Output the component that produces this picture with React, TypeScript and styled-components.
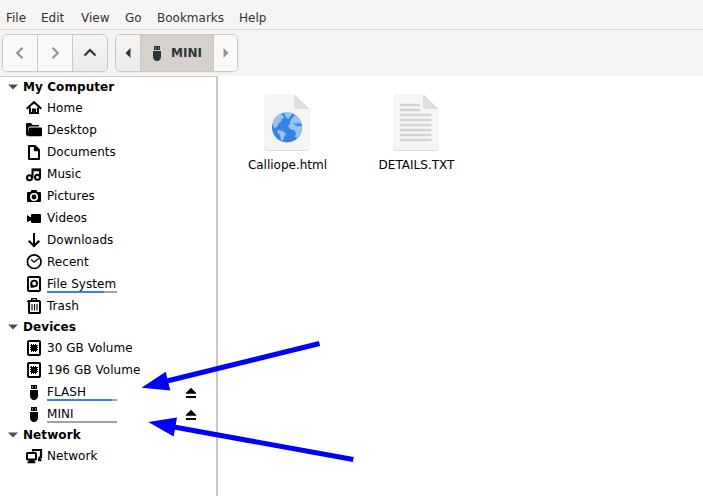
import React from 'react';
import styled, { createGlobalStyle } from 'styled-components';

const GlobalStyle = createGlobalStyle`
  * { box-sizing: border-box; }
  body { margin: 0; overflow: hidden; background: #fff; }
`;

const Window = styled.div`
  position: relative;
  display: flex;
  flex-direction: column;
  width: 703px;
  height: 496px;
  overflow: hidden;
  background: #fff;
  color: #000;
  font: 12px 'DejaVu Sans', sans-serif;
`;

const MenuBar = styled.nav`
  display: flex;
  flex: none;
  gap: 16px;
  height: 30px;
  padding: 6px 6px 0;
  background: #f6f5f4;
  border-bottom: 1px solid #dcdad7;
  color: #2e3436;
  line-height: 24px;
`;

const MenuItem = styled.span<{ $w: number }>`
  width: ${(p) => p.$w}px;
  white-space: nowrap;
`;

const Toolbar = styled.div`
  display: flex;
  flex: none;
  gap: 7px;
  height: 46px;
  padding: 4px 2px 0;
  background: #f5f4f2;
`;

const ButtonGroup = styled.div`
  display: flex;
  height: 38px;
  border: 1px solid #cdc7c2;
  border-radius: 5px;
  overflow: hidden;
  box-shadow: 0 1px 1px rgba(0, 0, 0, 0.04);
`;

const ToolButton = styled.button<{ $w: number; $kind?: 'raised' | 'active' }>`
  display: flex;
  align-items: center;
  justify-content: center;
  gap: 6px;
  width: ${(p) => p.$w}px;
  padding: 0 ${(p) => (p.$kind === 'active' ? 3 : 0)}px 0 0;
  border: 0;
  background: ${(p) =>
    p.$kind === 'active' ? '#d6d1cd' : p.$kind === 'raised' ? 'linear-gradient(#f6f5f4, #edebe9)' : '#faf9f8'};
  color: ${(p) => (p.$kind ? '#2e3436' : '#929595')};
  font: bold 12px 'DejaVu Sans', sans-serif;
  & + & { border-left: 1px solid #cdc7c2; }
`;

const Body = styled.div`
  display: flex;
  flex: 1;
  min-height: 0;
`;

const Sidebar = styled.aside`
  width: 218px;
  border-top: 1px solid #cdc7c2;
  border-right: 2px solid #cdc7c2;
`;

const SectionTitle = styled.div`
  display: flex;
  align-items: center;
  gap: 5px;
  height: 20px;
  padding-left: 8px;
  font-weight: bold;
  letter-spacing: 0.08px;
`;

const Place = styled.div`
  display: flex;
  gap: 5px;
  height: 22px;
  padding: 3px 17px 0 26px;
`;

const PlaceLabel = styled.div`
  flex: 1;
  line-height: 16px;
  letter-spacing: 0.05px;
  white-space: nowrap;
`;

const Usage = styled.div<{ $used: number }>`
  width: 70px;
  height: 2px;
  margin-top: -1px;
  background: linear-gradient(90deg, #3584e4 ${(p) => p.$used}px, #a8a09b ${(p) => p.$used}px);
`;

const Icon = styled.svg`
  display: block;
  flex: none;
  overflow: visible;
`;

const Files = styled.main`
  display: flex;
  flex: 1;
  padding: 18px 0 0 4px;
`;

const FileItem = styled.div`
  display: flex;
  flex-direction: column;
  align-items: center;
  gap: 6px;
  width: 129px;
  line-height: 15px;
`;

const FileName = styled.span`
  padding-left: 2px;
`;

const Annotation = styled.svg`
  position: absolute;
  inset: 0;
  pointer-events: none;
`;

const usb = (
  <>
    <path fillRule="evenodd" d="M5 1h6v4H5zM6 2.500v1h1v-1zM9 2.500v1h1v-1z" />
    <path d="M4 6h8v5.500C12 14 10.500 16 8 16s-4-2-4-4.500z" />
  </>
);
const volume = (
  <>
    <rect x="2" y="1" width="12" height="14" rx="1" fill="none" stroke="#000" strokeWidth="2" />
    <path d="M5 5h6v6H5z" />
    <path d="M4 5.500h8M4 7.500h8M4 9.500h8M5.500 4v8M7.500 4v8M9.500 4v8" stroke="#000" fill="none" />
  </>
);

const icons: Record<string, React.ReactNode> = {
  home: (
    <>
      <path d="M.7 8.700 8 2.200l7.300 6.500" fill="none" stroke="#000" strokeWidth="2" />
      <path d="M4 7.500V13h2.900V9.500h2.200V13H12V7.500" fill="none" stroke="#000" strokeWidth="2" />
    </>
  ),
  desktop: (
    <>
      <path d="M0 2q0-1 1-1h4l1.500 2H12q1 0 1 1v.500H4q-1.500 0-1.800 1.500L2 13.500H1Q0 13.500 0 12.500z" />
      <path d="M4 5.500H15q1 0 1 1V13q0 1.300-1 1.300H1.500L2.800 6.500Q3 5.500 4 5.500z" />
    </>
  ),
  documents: <path d="M3 2h6l4 4v9H3zM8.800 2v4.200H13" fill="none" stroke="#000" strokeWidth="2" strokeLinejoin="round" />,
  music: (
    <g fill="none" stroke="#000" strokeWidth="2">
      <circle cx="3.500" cy="11.700" r="2.500" />
      <circle cx="11.500" cy="11.200" r="2.500" />
      <path d="M6.500 12V3.500H14V11" />
      <path d="M6.500 4h7.500" strokeWidth="2.500" />
    </g>
  ),
  pictures: (
    <path
      fillRule="evenodd"
      d="M5.500 2h5l1 2H14q1 0 1 1v8q0 1-1 1H2q-1 0-1-1V5q0-1 1-1h2.500zM8 5a4 4 0 1 0 0 8 4 4 0 0 0 0-8zM8 6.600a2.400 2.400 0 1 1 0 4.800 2.400 2.400 0 0 1 0-4.800z"
    />
  ),
  videos: <path d="M6 4h8q1 0 1 1v7q0 1-1 1H6q-1 0-1-1v-1.500L1 12V5l4 2.500V5q0-1 1-1z" />,
  downloads: <path d="M8 1v12M2.700 8.700 8 14l5.300-5.300" fill="none" stroke="#000" strokeWidth="2" />,
  recent: (
    <>
      <circle cx="8.200" cy="7.700" r="6.800" fill="none" stroke="#000" strokeWidth="1.700" />
      <path d="m5.200 5.500 2.800 2.700 4.500-3.700" fill="none" stroke="#000" strokeWidth="1.200" />
    </>
  ),
  filesystem: (
    <>
      <rect x="2" y="1" width="12" height="14" rx="1" fill="none" stroke="#000" strokeWidth="2" />
      <circle cx="8.200" cy="7.500" r="2.900" fill="none" stroke="#000" strokeWidth="1.900" />
      <path d="M4.500 7v4.700h3.200V10L5.500 8z" />
    </>
  ),
  trash: (
    <>
      <path d="M1 4q0-2 2-2h2V0h6v2h2q2 0 2 2zM6.500 1.300V2h3v-.700z" fillRule="evenodd" />
      <path d="M3 4v10.500q0 .500.500.500h10q.500 0 .500-.500V4" fill="none" stroke="#000" strokeWidth="2" />
      <path d="M6 6v6.500M8.500 6v6.500M11 6v6.500" stroke="#000" strokeWidth="1.100" />
    </>
  ),
  volume,
  usb,
  network: (
    <>
      <path d="M7 3.500V2h8v7.500h-2.500" fill="none" stroke="#000" strokeWidth="2.200" />
      <rect x="1" y="5" width="9" height="6.500" rx=".5" fill="#fff" stroke="#000" strokeWidth="2" />
      <path d="M3.500 12h4l2 2v1.200h-8V14zM12 10h2l1.500 2v1.200H12z" />
    </>
  ),
};

type Entry = { icon: string; label: string; used?: number; eject?: boolean };

const sections: { title: string; places: Entry[] }[] = [
  {
    title: 'My Computer',
    places: [
      { icon: 'home', label: 'Home' },
      { icon: 'desktop', label: 'Desktop' },
      { icon: 'documents', label: 'Documents' },
      { icon: 'music', label: 'Music' },
      { icon: 'pictures', label: 'Pictures' },
      { icon: 'videos', label: 'Videos' },
      { icon: 'downloads', label: 'Downloads' },
      { icon: 'recent', label: 'Recent' },
      { icon: 'filesystem', label: 'File System', used: 57 },
      { icon: 'trash', label: 'Trash' },
    ],
  },
  {
    title: 'Devices',
    places: [
      { icon: 'volume', label: '30 GB Volume' },
      { icon: 'volume', label: '196 GB Volume' },
      { icon: 'usb', label: 'FLASH', used: 65, eject: true },
      { icon: 'usb', label: 'MINI', used: 0, eject: true },
    ],
  },
  { title: 'Network', places: [{ icon: 'network', label: 'Network' }] },
];

const menus: [string, number][] = [
  ['File', 19],
  ['Edit', 24],
  ['View', 28],
  ['Go', 16],
  ['Bookmarks', 66],
  ['Help', 30],
];

function Sheet({ children }: { children: React.ReactNode }) {
  return (
    <Icon width="46" height="58" viewBox="0 0 46 58">
      <path d="M4 .5h26l15.500 15V53q0 4-4 4H4q-4 0-4-4V4.500q0-4 4-4z" fill="#deddda" />
      <path d="M4 0h26l15.500 15V52q0 4-4 4H4q-4 0-4-4V4q0-4 4-4z" fill="#f6f5f4" />
      <path d="M30 0l15.500 15H32q-2 0-2-2z" fill="#deddda" />
      {children}
    </Icon>
  );
}

export default function App() {
  return (
    <Window>
      <GlobalStyle />
      <MenuBar>
        {menus.map(([label, w]) => (
          <MenuItem key={label} $w={w}>{label}</MenuItem>
        ))}
      </MenuBar>
      <Toolbar>
        <ButtonGroup>
          <ToolButton $w={34} aria-label="Back">
            <Icon width="16" height="16" fill="none" stroke="currentColor" strokeWidth="2.200"><path d="M10.500 2.700 5.200 8l5.300 5.300" /></Icon>
          </ToolButton>
          <ToolButton $w={35} aria-label="Forward">
            <Icon width="16" height="16" fill="none" stroke="currentColor" strokeWidth="2.200"><path d="M5.500 2.700 10.800 8l-5.300 5.300" /></Icon>
          </ToolButton>
          <ToolButton $w={35} $kind="raised" aria-label="Up">
            <Icon width="16" height="16" fill="none" stroke="currentColor" strokeWidth="2.200"><path d="M2.500 10.500 8 5l5.500 5.500" /></Icon>
          </ToolButton>
        </ButtonGroup>
        <ButtonGroup>
          <ToolButton $w={24} $kind="raised" aria-label="Previous location">
            <Icon width="16" height="16" fill="currentColor"><path d="M10.500 3v10L5.500 8z" /></Icon>
          </ToolButton>
          <ToolButton $w={73} $kind="active">
            <Icon width="16" height="16" fill="currentColor">{usb}</Icon>
            MINI
          </ToolButton>
          <ToolButton $w={24} aria-label="Next location">
            <Icon width="16" height="16" fill="currentColor"><path d="M5.500 3v10l5-5z" /></Icon>
          </ToolButton>
        </ButtonGroup>
      </Toolbar>
      <Body>
        <Sidebar>
          {sections.map((s) => (
            <section key={s.title}>
              <SectionTitle>
                <Icon width="10" height="6" fill="#4d4d4d"><path d="M0 .5h10L5 5.500z" /></Icon>
                {s.title}
              </SectionTitle>
              {s.places.map((p) => (
                <Place key={p.label}>
                  <Icon width="16" height="16">{icons[p.icon]}</Icon>
                  <PlaceLabel>
                    {p.label}
                    {p.used !== undefined && <Usage $used={p.used} />}
                  </PlaceLabel>
                  {p.eject && (
                    <Icon width="16" height="16"><path d="M8 3.800l5.200 5.200v.7H2.800V9zM3 12h10v2H3z" /></Icon>
                  )}
                </Place>
              ))}
            </section>
          ))}
        </Sidebar>
        <Files>
          <FileItem>
            <Sheet>
              <circle cx="23" cy="33.500" r="15" fill="#3584e4" />
              <path
                fill="#99c1f1"
                d="M9 28q2-6 7-8l3 1 1 3-2 1-1 3-2 1-2 4-3 1-1-2zM20 19q4-1.500 8 0l-1 3-3 3-2-2zM14 36l5 1 3 3-2 3-1 4-2-1-1-5-3-3zM26 28l2-4 3-3q4 3 6 7l-1 2-2-1-2 2 1 1 4 0 1 1q0 5-3 9l-2 2-2-1 1-4-2-3-4-1-2-3 2-2z"
              />
              <path d="M29 29l2 1 2-1 2 1M31 31l3 1" stroke="#3584e4" strokeWidth=".8" fill="none" />
            </Sheet>
            <FileName>Calliope.html</FileName>
          </FileItem>
          <FileItem>
            <Sheet>
              <path d="M7 11h20M7 16h20M7 21h31.500M7 26h31.500M7 31h31.500M7 36h31.500M7 41h31.500M7 46h31.500" stroke="#d5d4d1" strokeWidth="2.400" />
            </Sheet>
            <FileName>DETAILS.TXT</FileName>
          </FileItem>
        </Files>
      </Body>
      <Annotation width="703" height="496" fill="#00f" stroke="#00f">
        <path d="M319.500 343.500 167 381M353.300 459.500 174 427" strokeWidth="5" />
        <path d="M141.500 387.700 165.700 371.800 170.300 390.500zM148.300 422 177 417.500 173.700 436.500z" stroke="none" />
      </Annotation>
    </Window>
  );
}
